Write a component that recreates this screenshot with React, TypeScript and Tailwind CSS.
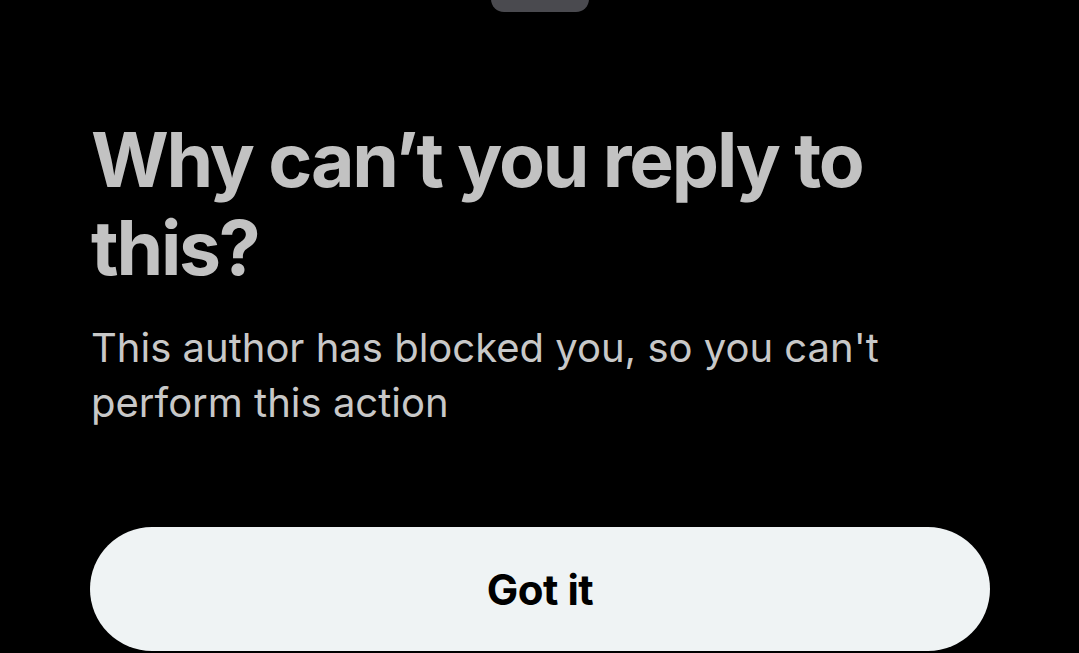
export default function App() {
  return (
    <div className="h-[653px] w-[1079px] overflow-hidden bg-black flex flex-col items-center">
      <div className="-mt-[14px] h-[26px] w-[98px] rounded-full bg-[#4a4a4f]" />
      <div className="w-full px-[91px] pt-[104px]">
        <h1 className="font-['Inter',sans-serif] text-[75px] font-bold leading-[88px] tracking-[-2.2px] text-[#c2c2c2]">
          Why can’t you reply to this?
        </h1>
        <p className="mt-[28px] pr-[100px] font-['Inter',sans-serif] text-[40px] leading-[55px] text-[#c8c8c8]">
          This author has blocked you, so you can't perform this action
        </p>
        <button className="mt-[97px] flex h-[124px] w-[900px] -ml-px items-center justify-center rounded-full bg-[#eff3f4] font-['Inter',sans-serif] text-[42px] font-bold tracking-[-0.5px] text-black">
          Got it
        </button>
      </div>
    </div>
  );
}
